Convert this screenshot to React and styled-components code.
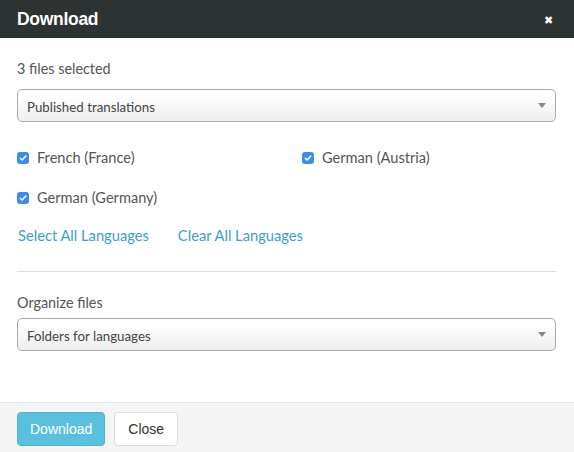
import React from 'react';
import styled, { createGlobalStyle } from 'styled-components';

const GlobalStyle = createGlobalStyle`
  html, body {
    margin: 0;
    padding: 0;
    background: #fff;
  }
  body {
    font-family: 'Lato', 'Helvetica Neue', Arial, sans-serif;
    color: #555;
  }
  * {
    box-sizing: border-box;
  }
`;

const Modal = styled.div`
  width: 574px;
  height: 452px;
  display: flex;
  flex-direction: column;
  background: #fff;
`;

const Header = styled.header`
  height: 38px;
  background: #2d3233;
  display: flex;
  align-items: center;
  justify-content: space-between;
  padding: 0 21px 0 17px;
`;

const Title = styled.h1`
  margin: 0;
  font-family: 'Liberation Sans', Arial, sans-serif;
  font-size: 17.5px;
  font-weight: 700;
  color: #fff;
  letter-spacing: -0.3px;
`;

const CloseX = styled.span`
  color: #fff;
  font-size: 11px;
  line-height: 1;
  cursor: pointer;
`;

const Body = styled.main`
  flex: 1;
  padding: 22px 18px 0 17px;
`;

const Label = styled.div`
  font-size: 14.4px;
  color: #555;
  margin-bottom: ${p => p.$gap || 12}px;
  line-height: 17px;
`;

const SelectBox = styled.div`
  height: 33px;
  border: 1px solid #aaa;
  border-radius: 5px;
  background: linear-gradient(#fff 20%, #eee 100%);
  display: flex;
  align-items: center;
  justify-content: space-between;
  padding: 3px 9px 0 9px;
  font-size: 13.3px;
  color: #444;
`;

const Caret = styled.span`
  width: 0;
  height: 0;
  margin-top: -3px;
  border-left: 4px solid transparent;
  border-right: 4px solid transparent;
  border-top: 5px solid #888;
`;

const LangGrid = styled.div`
  display: grid;
  grid-template-columns: 285px 1fr;
  row-gap: 22px;
  margin-top: 27px;
`;

const CheckItem = styled.label`
  display: flex;
  align-items: center;
  gap: 8px;
  font-size: 14.6px;
  color: #555;
  line-height: 18px;
`;

const Box = styled.span`
  width: 12px;
  height: 12px;
  border-radius: 3px;
  background: #3b8eea;
  display: inline-flex;
  align-items: center;
  justify-content: center;
`;

const Links = styled.div`
  display: flex;
  gap: 29px;
  margin-top: 19px;
  padding-left: 1px;
`;

const TextLink = styled.a`
  font-size: 14.7px;
  color: #3a9fcc;
  cursor: pointer;
`;

const Divider = styled.hr`
  border: 0;
  border-top: 1px solid #ddd;
  margin: 27px 0 22px;
`;

const Footer = styled.footer`
  height: 50px;
  background: #f5f5f5;
  border-top: 1px solid #e5e5e5;
  display: flex;
  align-items: center;
  gap: 9px;
  padding: 0 17px;
`;

const Button = styled.button`
  height: 34px;
  padding: 0 ${p => (p.$primary ? '12px' : '13px')};
  border-radius: 4px;
  font-family: 'Liberation Sans', Arial, sans-serif;
  font-size: 14px;
  border: 1px solid ${p => (p.$primary ? '#46b8da' : '#ddd')};
  background: ${p => (p.$primary ? '#5bc0de' : '#fff')};
  color: ${p => (p.$primary ? '#fff' : '#333')};
  margin-top: 2px;
`;

const Check = () => (
  <Box>
    <svg width="8" height="8" viewBox="0 0 8 8">
      <path d="M1.3 4.2 L3.2 6 L6.8 2" fill="none" stroke="#fff" strokeWidth="1.5" strokeLinecap="round" strokeLinejoin="round" />
    </svg>
  </Box>
);

const languages = ['French (France)', 'German (Austria)', 'German (Germany)'];

export default function App() {
  return (
    <Modal>
      <GlobalStyle />
      <Header>
        <Title>Download</Title>
        <CloseX>✖</CloseX>
      </Header>
      <Body>
        <Label>3 files selected</Label>
        <SelectBox>
          Published translations
          <Caret />
        </SelectBox>
        <LangGrid>
          {languages.map(l => (
            <CheckItem key={l}>
              <Check />
              {l}
            </CheckItem>
          ))}
        </LangGrid>
        <Links>
          <TextLink>Select All Languages</TextLink>
          <TextLink>Clear All Languages</TextLink>
        </Links>
        <Divider />
        <Label $gap={7}>Organize files</Label>
        <SelectBox>
          Folders for languages
          <Caret />
        </SelectBox>
      </Body>
      <Footer>
        <Button $primary>Download</Button>
        <Button>Close</Button>
      </Footer>
    </Modal>
  );
}
